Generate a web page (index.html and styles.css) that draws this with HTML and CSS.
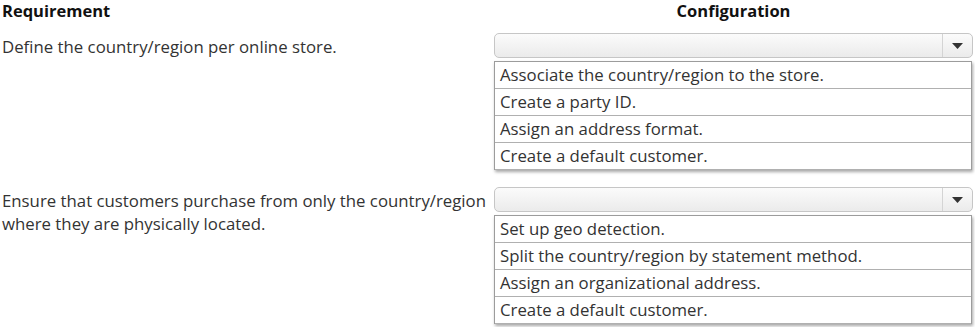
FILE: index.html
```html
<!DOCTYPE html>
<html lang="en">
<head>
    <meta charset="UTF-8">
    <title>Requirement / Configuration</title>
    <link rel="stylesheet" href="styles.css">
</head>
<body>
    <div class="grid">
        <div class="head">Requirement</div>
        <div class="head center">Configuration</div>

        <div class="req">Define the country/region per online store.</div>
        <div class="config">
            <div class="combo">
                <span class="combo-value"></span>
                <span class="combo-btn">
                    <svg width="11" height="6" viewBox="0 0 11 6"><path d="M0 0h11L5.5 6z" fill="#333"/></svg>
                </span>
            </div>
            <ul class="options">
                <li>Associate the country/region to the store.</li>
                <li>Create a party ID.</li>
                <li>Assign an address format.</li>
                <li>Create a default customer.</li>
            </ul>
        </div>

        <div class="req">Ensure that customers purchase from only the country/region<br>where they are physically located.</div>
        <div class="config">
            <div class="combo">
                <span class="combo-value"></span>
                <span class="combo-btn">
                    <svg width="11" height="6" viewBox="0 0 11 6"><path d="M0 0h11L5.5 6z" fill="#333"/></svg>
                </span>
            </div>
            <ul class="options">
                <li>Set up geo detection.</li>
                <li>Split the country/region by statement method.</li>
                <li>Assign an organizational address.</li>
                <li>Create a default customer.</li>
            </ul>
        </div>
    </div>
</body>
</html>
```

FILE: styles.css
```css
body {
    margin: 0;
    padding: 0 2px;
    font-family: "Open Sans", "Noto Sans", sans-serif;
    font-size: 16.8px;
    color: #333;
    background-color: #fff;
}
.grid {
    display: grid;
    grid-template-columns: 492px 479px;
}
.head {
    font-size: 16.5px;
    font-weight: bold;
    color: #111;
    line-height: 22px;
    height: 33px;
}
.center {
    text-align: center;
}
.req {
    line-height: 23px;
    padding-top: 2px;
    white-space: nowrap;
}
.config {
    margin-bottom: 17px;
}
.combo {
    display: flex;
    height: 23px;
    border: 1px solid #c6c6c6;
    border-radius: 5px;
    background: linear-gradient(#fbfbfb, #ebebeb);
}
.combo-value {
    flex: 1;
}
.combo-btn {
    width: 29px;
    border-left: 1px solid #d4d4d4;
    display: flex;
    align-items: center;
    justify-content: center;
}
.options {
    list-style: none;
    margin: 3px 1px 0 0;
    padding: 0;
    border: 1px solid #9c9c9c;
    border-bottom: none;
    box-shadow: 1px 2px 3px rgba(0, 0, 0, 0.35);
}
.options li {
    height: 26px;
    line-height: 26px;
    padding-left: 5px;
    border-bottom: 1px solid #b0b0b0;
    white-space: nowrap;
}
```
